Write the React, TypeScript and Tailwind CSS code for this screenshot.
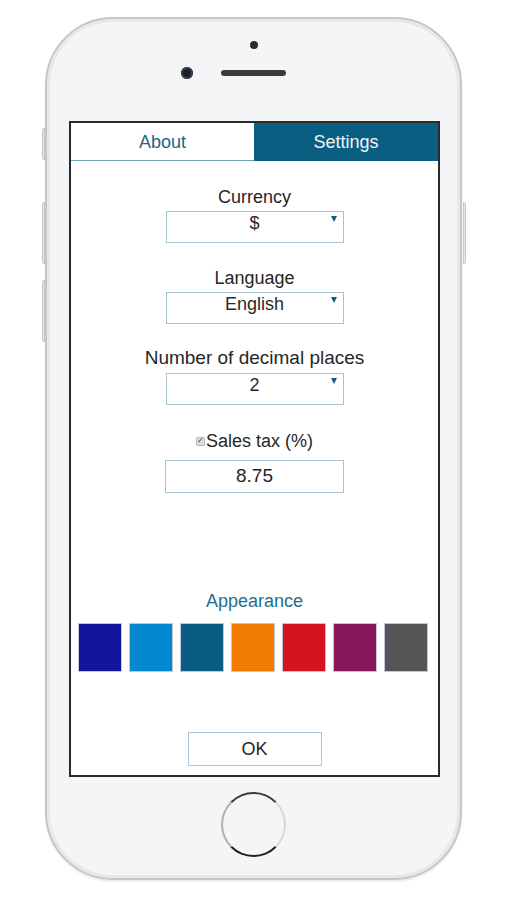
import { useState } from 'react';

const swatches = ['#12169a', '#0489d0', '#0a5d82', '#f07d02', '#d5141f', '#87185c', '#555555'];

function SelectBox({ value }: { value: string }) {
  return (
    <div className="relative mx-auto mt-[3px] h-[32px] w-[178px] border-[1.5px] border-[#a9c5d1] bg-white">
      <div className="pt-[1px] text-center text-[18px] leading-[20px] text-[#2a2a2a]">{value}</div>
      <div className="absolute right-[6px] top-[4px] h-0 w-0 border-x-[3.5px] border-t-[6px] border-x-transparent border-t-[#135b7c]" />
    </div>
  );
}

function Label({ children, className = '' }: { children: React.ReactNode; className?: string }) {
  return <div className={`text-center leading-[22px] text-[#262626] ${className}`}>{children}</div>;
}

export default function App() {
  const [tab, setTab] = useState<'about' | 'settings'>('settings');
  const [taxOn, setTaxOn] = useState(true);

  return (
    <div
      className="relative h-[900px] w-[507px] overflow-hidden bg-white pl-[45px] pt-[17px]"
      style={{ fontFamily: '"Liberation Sans", Arial, sans-serif' }}
    >
      <div className="relative h-[863px] w-[417px] rounded-[68px] border-2 border-[#c4c6c8] bg-[#f4f5f6] shadow-[inset_0_0_0_3px_#e6e8e9,0_2px_2px_rgba(0,0,0,0.08)]">
        {/* side buttons */}
        <div className="absolute left-[-5px] top-[109px] h-[32px] w-[3px] rounded-l-sm border border-[#c4c6c8] bg-[#e7e8e9]" />
        <div className="absolute left-[-5px] top-[183px] h-[62px] w-[3px] rounded-l-sm border border-[#c4c6c8] bg-[#e7e8e9]" />
        <div className="absolute left-[-5px] top-[261px] h-[62px] w-[3px] rounded-l-sm border border-[#c4c6c8] bg-[#e7e8e9]" />
        <div className="absolute right-[-6px] top-[183px] h-[62px] w-[3px] rounded-r-sm border border-[#c4c6c8] bg-[#e7e8e9]" />

        {/* top: sensor, camera, speaker */}
        <div className="flex h-[102px] flex-col items-center">
          <div className="mt-[22px] h-[8px] w-[8px] rounded-full bg-[#2b2b2b]" />
          <div className="mt-[18px] flex items-center">
            <div className="h-[12px] w-[12px] rounded-full bg-[#1b1e2c] shadow-[inset_0_0_0_2px_#3a3d4a]" />
            <div className="w-[28px]" />
            <div className="h-[6px] w-[65px] rounded-full bg-[#3a3a3a]" />
            <div className="w-[40px]" />
          </div>
        </div>

        {/* screen */}
        <div className="ml-[22px] flex h-[656px] w-[371px] flex-col border-2 border-[#2a2a2a] bg-white">
          <div className="flex h-[38px]">
            <button
              onClick={() => setTab('about')}
              className={`w-[183px] border-b border-[#6fa3b9] pt-[2px] text-[18px] ${tab === 'about' ? 'bg-[#0a5e82] text-white' : 'bg-white text-[#1d6688]'}`}
            >
              About
            </button>
            <button
              onClick={() => setTab('settings')}
              className={`flex-1 border-b border-[#0a5e82] pt-[2px] text-[18px] ${tab === 'settings' ? 'bg-[#0a5e82] text-[#f2f6f8]' : 'bg-white text-[#1d6688]'}`}
            >
              Settings
            </button>
          </div>

          <Label className="mt-[25px] text-[18px]">Currency</Label>
          <SelectBox value="$" />

          <Label className="mt-[24px] text-[18px]">Language</Label>
          <SelectBox value="English" />

          <Label className="mt-[23px] text-[19px]">Number of decimal places</Label>
          <div className="mt-[1px]">
            <SelectBox value="2" />
          </div>

          <div className="mt-[25px] flex items-center justify-center">
            <button
              onClick={() => setTaxOn(!taxOn)}
              className="mr-[1px] flex h-[9px] w-[9px] items-center justify-center rounded-[1px] border border-[#b9b9b9] bg-[#dcdcdc] text-[8px] leading-none text-[#333]"
            >
              {taxOn ? '✓' : ''}
            </button>
            <span className="text-[18px] leading-[22px] text-[#262626]">Sales tax (%)</span>
          </div>
          <div className="mx-auto mt-[8px] flex h-[33px] w-[179px] items-center justify-center border-[1.5px] border-[#a9c5d1] text-[19px] text-[#262626]">
            8.75
          </div>

          <div className="mt-[97px] text-center text-[18px] leading-[22px] text-[#1f6d8f]">Appearance</div>
          <div className="mt-[11px] flex justify-center gap-[7px] pr-[3px]">
            {swatches.map((c) => (
              <div key={c} className="h-[49px] w-[44px] border border-[#c9c3da]" style={{ backgroundColor: c }} />
            ))}
          </div>

          <button className="mx-auto mt-[60px] flex h-[34px] w-[134px] items-center justify-center border border-[#a9c8d5] bg-white text-[18px] text-[#262626]">
            OK
          </button>
        </div>

        {/* home button */}
        <div className="mx-auto mt-[15px] h-[65px] w-[65px] rounded-full border-[2.5px] border-b-[#1f1f1f] border-l-[#b0b0b0] border-r-[#d8d8d8] border-t-[#3a3a3a]" />
      </div>
    </div>
  );
}
